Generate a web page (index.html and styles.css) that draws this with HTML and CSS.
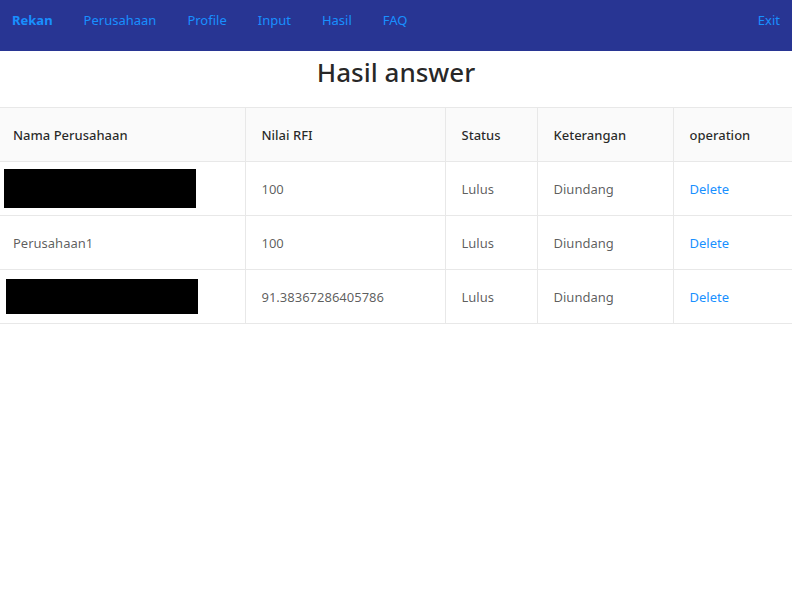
FILE: index.html
```html
<!DOCTYPE html>
<html>
<head>
<meta charset="utf-8">
<link rel="stylesheet" href="styles.css">
</head>
<body>
<nav class="nav">
  <div class="nav-left">
    <a class="nav-link brand">Rekan</a>
    <a class="nav-link">Perusahaan</a>
    <a class="nav-link">Profile</a>
    <a class="nav-link">Input</a>
    <a class="nav-link">Hasil</a>
    <a class="nav-link">FAQ</a>
  </div>
  <a class="nav-link exit">Exit</a>
</nav>
<h1 class="title">Hasil answer</h1>
<table class="tbl">
  <colgroup>
    <col class="c1"><col class="c2"><col class="c3"><col class="c4"><col class="c5">
  </colgroup>
  <thead>
    <tr>
      <th class="first">Nama Perusahaan</th>
      <th>Nilai RFI</th>
      <th>Status</th>
      <th>Keterangan</th>
      <th>operation</th>
    </tr>
  </thead>
  <tbody>
    <tr>
      <td class="first redact-cell"><span class="redact r1"></span></td>
      <td>100</td>
      <td>Lulus</td>
      <td>Diundang</td>
      <td><a class="del">Delete</a></td>
    </tr>
    <tr>
      <td class="first">Perusahaan1</td>
      <td>100</td>
      <td>Lulus</td>
      <td>Diundang</td>
      <td><a class="del">Delete</a></td>
    </tr>
    <tr>
      <td class="first redact-cell"><span class="redact r3"></span></td>
      <td>91.38367286405786</td>
      <td>Lulus</td>
      <td>Diundang</td>
      <td><a class="del">Delete</a></td>
    </tr>
  </tbody>
</table>
</body>
</html>
```

FILE: styles.css
```css
* { box-sizing: border-box; }
html, body { margin: 0; padding: 0; background: #fff; }
body {
  font-family: "Noto Sans", "Open Sans", sans-serif;
  font-size: 13px;
  color: rgba(0,0,0,0.65);
}
.nav {
  height: 51px;
  background: #283593;
  display: flex;
  justify-content: space-between;
  align-items: flex-start;
  padding: 10px 12px 0 12px;
}
.nav-left { display: flex; gap: 0; }
.nav-link {
  color: #1890ff;
  font-size: 13px;
  line-height: 20px;
  text-decoration: none;
}
.nav-left .nav-link { margin-right: 31px; }
.nav-link.brand { font-weight: 700; }
.title {
  margin: 0;
  text-align: center;
  font-size: 26px;
  font-weight: 500;
  color: rgba(0,0,0,0.85);
  line-height: 38px;
  padding: 2px 0 16px;
}
.tbl {
  width: 100%;
  border-collapse: collapse;
  table-layout: fixed;
}
.c1 { width: 245px; }
.c2 { width: 200px; }
.c3 { width: 92px; }
.c4 { width: 136px; }
.c5 { width: auto; }
.tbl th, .tbl td {
  height: 54px;
  padding: 0 16px;
  text-align: left;
  border-bottom: 1px solid #e8e8e8;
  border-right: 1px solid #e8e8e8;
  white-space: nowrap;
}
.tbl th:last-child, .tbl td:last-child { border-right: none; }
.tbl thead th {
  background: #fafafa;
  border-top: 1px solid #e8e8e8;
  color: rgba(0,0,0,0.85);
  font-weight: 500;
}
.tbl .first { padding-left: 13px; }
.tbl .redact-cell { padding-left: 4px; }
.redact {
  display: block;
  background: #000;
  width: 192px;
}
.r1 { height: 39px; }
.r3 { height: 35px; margin-left: 2px; }
.del { color: #1890ff; text-decoration: none; }
```
